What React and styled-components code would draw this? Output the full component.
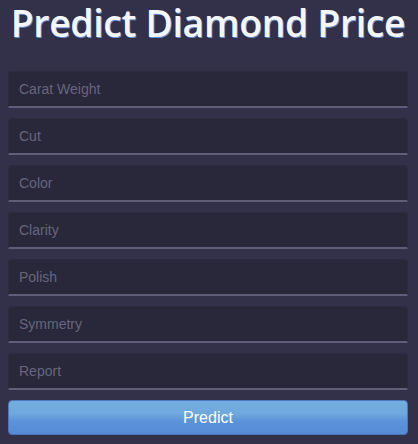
import styled, { createGlobalStyle } from "styled-components";

const Global = createGlobalStyle`
  html, body {
    margin: 0;
    padding: 0;
    background: #33304a;
  }
  body {
    font-family: "Liberation Sans", Arial, sans-serif;
  }
`;

const Page = styled.main`
  width: 418px;
  height: 444px;
  box-sizing: border-box;
  padding: 0 10px 0 8px;
  display: flex;
  flex-direction: column;
  background: #33304a;
`;

const Title = styled.h1`
  margin: 0 -8px;
  padding-top: 1px;
  height: 67px;
  box-sizing: border-box;
  font-family: "Open Sans", sans-serif;
  font-weight: 600;
  font-size: 37.3px;
  line-height: 44px;
  white-space: nowrap;
  color: #f4f6fa;
  text-align: center;
  letter-spacing: -0.3px;
  text-shadow: 1px 1px 0 #6a8fd0;
`;

const Form = styled.form`
  display: flex;
  flex-direction: column;
  gap: 10px;
  padding-top: 4px;
`;

const Field = styled.input`
  box-sizing: border-box;
  width: 100%;
  height: 37px;
  padding: 0 10px;
  border: 1px solid #2c2b3f;
  border-bottom: 2px solid #5f5d77;
  border-radius: 4px 4px 0 0;
  background: #29283b;
  color: #d0d0dc;
  font-family: "Liberation Sans", Arial, sans-serif;
  font-size: 14px;
  outline: none;

  &::placeholder {
    color: #67657c;
  }
`;

const Button = styled.button`
  height: 35px;
  width: 100%;
  border: 1px solid #4a78bd;
  border-radius: 4px;
  background: linear-gradient(
    #74aee0 0%,
    #6fa8de 40%,
    #5c93da 60%,
    #558bd7 100%
  );
  color: #ffffff;
  font-family: "Liberation Sans", Arial, sans-serif;
  font-size: 16px;
  padding-top: 2px;
  cursor: pointer;
`;

const fields = [
  "Carat Weight",
  "Cut",
  "Color",
  "Clarity",
  "Polish",
  "Symmetry",
  "Report",
];

export default function App() {
  return (
    <Page>
      <Global />
      <Title>Predict Diamond Price</Title>
      <Form onSubmit={(e) => e.preventDefault()}>
        {fields.map((f) => (
          <Field key={f} placeholder={f} />
        ))}
        <Button type="submit">Predict</Button>
      </Form>
    </Page>
  );
}
